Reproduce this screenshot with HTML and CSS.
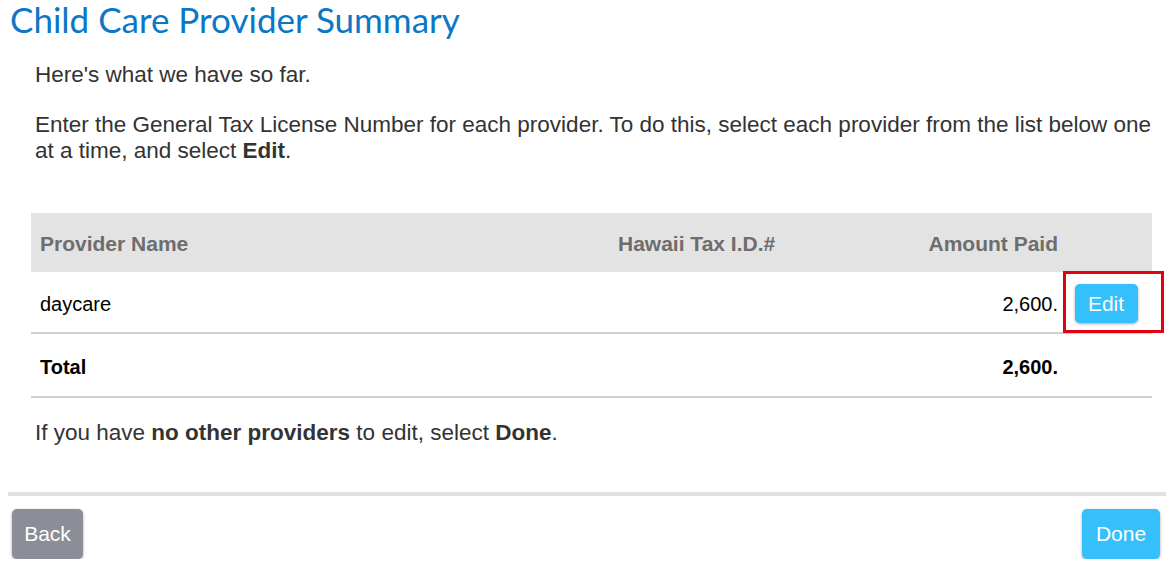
FILE: index.html
```html
<!DOCTYPE html>
<html>
  <head>
    <title>Child Care Provider Summary</title>
    <meta charset="UTF-8" />
    <link rel="stylesheet" href="styles.css">
  </head>
  <body>
    <h1>Child Care Provider Summary</h1>
    <div class="content">
      <p>Here's what we have so far.</p>
      <p>Enter the General Tax License Number for each provider. To do this, select each provider from the list below one at a time, and select <strong>Edit</strong>.</p>
      <table class="providers">
        <thead>
          <tr>
            <th class="name">Provider Name</th>
            <th class="taxid">Hawaii Tax I.D.#</th>
            <th class="amount">Amount Paid</th>
            <th class="action"></th>
          </tr>
        </thead>
        <tbody>
          <tr>
            <td class="name">daycare</td>
            <td class="taxid"></td>
            <td class="amount">2,600.</td>
            <td class="action"><span class="highlight"></span><button class="btn btn-blue btn-small">Edit</button></td>
          </tr>
          <tr class="total">
            <td class="name">Total</td>
            <td class="taxid"></td>
            <td class="amount">2,600.</td>
            <td class="action"></td>
          </tr>
        </tbody>
      </table>
      <p class="after">If you have <strong>no other providers</strong> to edit, select <strong>Done</strong>.</p>
    </div>
    <div class="footer">
      <button class="btn btn-gray">Back</button>
      <button class="btn btn-blue">Done</button>
    </div>
  </body>
</html>
```

FILE: styles.css
```css
body {
  margin: 0 10px 0 8px;
  font-family: "Liberation Sans", Arial, sans-serif;
  color: #333;
}
h1 {
  margin: 0;
  padding: 0 0 0 2px;
  font-family: Lato, "Open Sans", sans-serif;
  font-weight: normal;
  font-size: 35px;
  line-height: 38px;
  color: #0b77c5;
}
.content {
  padding: 0 6px 0 23px;
}
p {
  margin: 0;
  padding: 0 0 0 4px;
  font-size: 22.5px;
  line-height: 26px;
}
.content p:first-child {
  margin-top: 24px;
  margin-bottom: 24px;
}
table.providers {
  width: 1121px;
  margin-top: 49px;
  border-collapse: collapse;
  font-size: 20px;
}
.providers th {
  background: #e3e3e3;
  color: #6d6d6d;
  font-size: 21px;
  font-weight: bold;
  height: 57px;
  padding: 2px 0 0;
  text-align: left;
}
.providers td {
  height: 56px;
  padding: 4px 0 0;
  color: #000;
  border-bottom: 2px solid #cfcfcf;
}
.providers .name {
  padding-left: 9px;
  width: 578px;
}
.providers .taxid {
  width: 240px;
}
.providers .amount {
  text-align: right;
  width: 200px;
}
.providers .action {
  width: 94px;
  position: relative;
  text-align: center;
}
.providers td.action {
  height: 57px;
  padding-top: 3px;
}
.providers .total td {
  font-weight: bold;
  height: 58px;
  padding-top: 4px;
}
.highlight {
  position: absolute;
  left: 5px;
  top: -1px;
  width: 95px;
  height: 56px;
  border: 3px solid #e3000f;
}
.after {
  margin-top: 22px;
}
.footer {
  margin-top: 46px;
  border-top: 4px solid #e2e2e2;
  display: flex;
  justify-content: space-between;
  padding: 13px 6px 0 4px;
}
.btn {
  border: 0;
  border-radius: 5px;
  color: #fff;
  font-family: "Liberation Sans", Arial, sans-serif;
  font-size: 21px;
  height: 50px;
  padding: 0 12px;
  box-shadow: 0 1px 3px rgba(0, 0, 0, 0.35);
}
.btn-gray {
  background: #8b8e96;
  width: 71px;
}
.btn-blue {
  background: #36c0fb;
  width: 78px;
}
.btn-small {
  width: 63px;
  height: 39px;
  font-size: 21px;
  padding: 0;
  margin-left: 2px;
}
```
